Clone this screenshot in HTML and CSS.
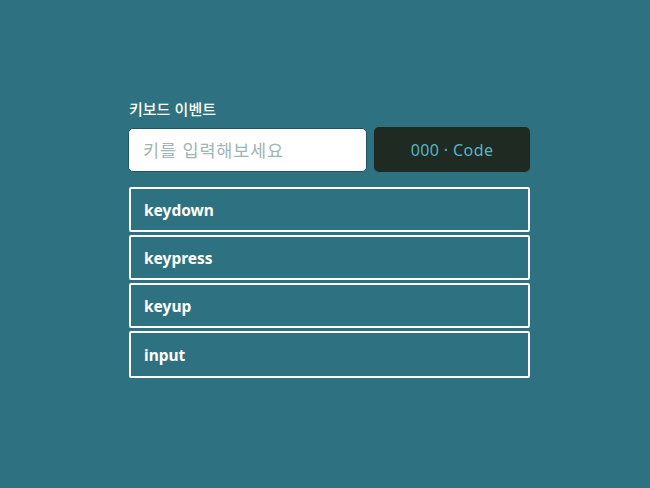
FILE: index.html
```html
<!DOCTYPE html>
<html lang="ko">
<head>
<meta charset="utf-8">
<link rel="stylesheet" href="styles.css">
</head>
<body>
<main class="panel">
  <h1 class="title">키보드 이벤트</h1>
  <div class="row">
    <input class="key-input" type="text" placeholder="키를 입력해보세요">
    <div class="code">000 · Code</div>
  </div>
  <ul class="events">
    <li class="event">keydown</li>
    <li class="event">keypress</li>
    <li class="event">keyup</li>
    <li class="event">input</li>
  </ul>
</main>
</body>
</html>
```
FILE: styles.css
```css
html, body {
  margin: 0;
  padding: 0;
}
body {
  background: #2e7282;
  width: 650px;
  height: 488px;
  font-family: "Noto Sans", "Noto Sans CJK KR", sans-serif;
  color: #fff;
}
.panel {
  width: 402px;
  margin-left: 128px;
  padding-top: 98px;
}
.title {
  margin: 0 0 8px 1px;
  font-size: 15px;
  font-weight: 500;
  line-height: 21px;
  font-family: "Noto Sans CJK KR", sans-serif;
}
.row {
  display: flex;
  gap: 7px;
  align-items: center;
}
.key-input {
  box-sizing: border-box;
  width: 239px;
  height: 44px;
  border: 1px solid #1d5563;
  border-radius: 5px;
  background: #fff;
  padding: 0 14px;
  font-size: 17.5px;
  letter-spacing: 0.8px;
  font-family: "Noto Sans CJK KR", sans-serif;
  outline: none;
}
.key-input::placeholder {
  color: #9fb4b7;
}
.code {
  flex: 1;
  height: 45px;
  border-radius: 5px;
  background: #1f2b22;
  color: #58b3c3;
  font-size: 16px;
  display: flex;
  align-items: center;
  justify-content: center;
  letter-spacing: 0.4px;
}
.events {
  list-style: none;
  margin: 15px 0 0 1px;
  padding: 0;
  display: flex;
  flex-direction: column;
  gap: 3px;
}
.event {
  box-sizing: border-box;
  height: 45px;
  border: 2px solid #fff;
  border-radius: 2px;
  padding: 0 13px;
  display: flex;
  align-items: center;
  font-size: 15.5px;
  font-weight: 700;
}
.event:last-child {
  height: 47px;
}
```
